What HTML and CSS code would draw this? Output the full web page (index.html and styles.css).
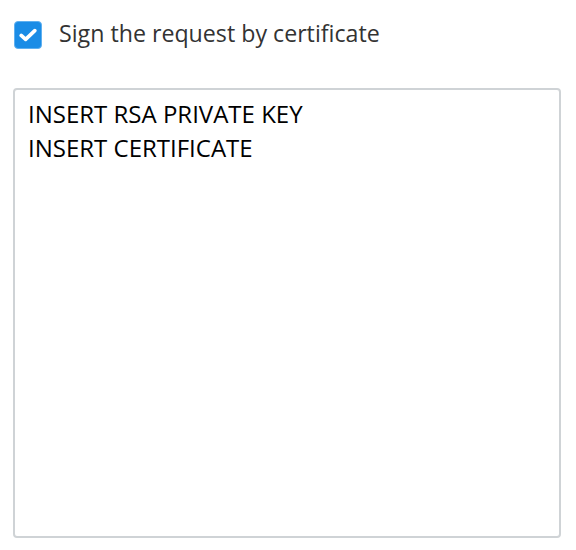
FILE: index.html
```html
<!DOCTYPE html>
<html>
<head>
<meta charset="utf-8">
<link rel="stylesheet" href="styles.css">
</head>
<body>
<div class="form">
  <label class="check-row">
    <span class="checkbox">
      <svg width="18" height="14" viewBox="0 0 18 14"><path d="M2.2 7.4 L6.6 11.4 L15.8 2.6" fill="none" stroke="#fff" stroke-width="3.6" stroke-linecap="round" stroke-linejoin="round"/></svg>
    </span>
    <span class="label">Sign the request by certificate</span>
  </label>
  <textarea class="cert">INSERT RSA PRIVATE KEY
INSERT CERTIFICATE</textarea>
</div>
</body>
</html>
```
FILE: styles.css
```css
html, body {
  margin: 0;
  padding: 0;
  background: #fff;
}
.form {
  padding: 21px 15px 0 14px;
  display: flex;
  flex-direction: column;
  font-family: "Open Sans", "Noto Sans", sans-serif;
}
.check-row {
  display: flex;
  align-items: center;
  gap: 17px;
  height: 28px;
}
.checkbox {
  width: 26px;
  height: 26px;
  border: 1px solid #5fb0f0;
  border-radius: 4px;
  background: #1a8ce6;
  display: flex;
  align-items: center;
  justify-content: center;
  flex: none;
}
.label {
  font-size: 23.2px;
  color: #333;
  margin-top: -4px;
}
.cert {
  margin: 39px 0 0 -1px;
  box-sizing: border-box;
  width: 548px;
  height: 450px;
  border: 2px solid #cfd3d6;
  border-radius: 4px;
  padding: 7px 13px;
  font-family: "Open Sans", "Noto Sans", sans-serif;
  font-size: 24px;
  line-height: 34px;
  color: #000;
  resize: none;
  outline: none;
}
```
